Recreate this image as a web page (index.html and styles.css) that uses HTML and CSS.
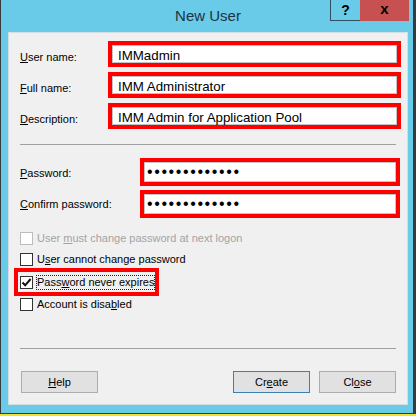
FILE: index.html
```html
<!DOCTYPE html>
<html>
<head>
<meta charset="utf-8">
<link rel="stylesheet" href="styles.css">
</head>
<body>
<div class="window">
  <div class="titlebar">
    <span class="title">New User</span>
    <div class="controls">
      <div class="ctl-help">?</div>
      <div class="ctl-close">x</div>
    </div>
  </div>
  <div class="dialog">
    <div class="group names">
      <div class="row">
        <div class="lbl"><u>U</u>ser name:</div>
        <div class="hl"><div class="input">IMMadmin</div></div>
      </div>
      <div class="row">
        <div class="lbl"><u>F</u>ull name:</div>
        <div class="hl"><div class="input">IMM Administrator</div></div>
      </div>
      <div class="row">
        <div class="lbl"><u>D</u>escription:</div>
        <div class="hl"><div class="input">IMM Admin for Application Pool</div></div>
      </div>
    </div>
    <div class="sep"></div>
    <div class="group pw">
      <div class="row">
        <div class="lbl"><u>P</u>assword:</div>
        <div class="hl"><div class="input dots">•••••••••••••</div></div>
      </div>
      <div class="row">
        <div class="lbl lbl2"><u>C</u>onfirm password:</div>
        <div class="hl"><div class="input dots">•••••••••••••</div></div>
      </div>
    </div>
    <div class="checks">
      <div class="check disabled"><span class="cb"></span><span class="ctext">User <u>m</u>ust change password at next logon</span></div>
      <div class="check"><span class="cb"></span><span class="ctext">U<u>s</u>er cannot change password</span></div>
      <div class="check marked"><span class="cb"><svg width="11" height="11" viewBox="0 0 11 11"><path d="M1.5 5.5 L4.2 8.3 L9.6 2" fill="none" stroke="#111" stroke-width="2"/></svg></span><span class="ctext focus">Pass<u>w</u>ord never expires</span></div>
      <div class="check"><span class="cb"></span><span class="ctext">Account is disa<u>b</u>led</span></div>
    </div>
    <div class="sep sep2"></div>
    <div class="buttons">
      <button class="btn"><u>H</u>elp</button>
      <button class="btn btn-default create">Cr<u>e</u>ate</button>
      <button class="btn">Cl<u>o</u>se</button>
    </div>
  </div>
</div>
</body>
</html>
```
FILE: styles.css
```css
* { box-sizing: border-box; }
html, body { margin: 0; padding: 0; }
body {
  width: 416px;
  height: 416px;
  overflow: hidden;
  background: #f1e12a;
  font-family: "Liberation Sans", Arial, sans-serif;
  font-size: 11px;
  color: #000;
}
.window {
  position: relative;
  width: 416px;
  height: 414px;
  background: #69cbe8;
  border-left: 1px solid #363b3f;
  border-right: 3px solid #363b3f;
  border-bottom: 1px solid #363b3f;
  padding: 0 5px 8px 7px;
  display: flex;
  flex-direction: column;
}
.titlebar {
  height: 32px;
  flex: none;
  display: flex;
  justify-content: center;
  padding-top: 7px;
}
.title {
  font-size: 15px;
  line-height: 18px;
  color: #1d3446;
}
.controls {
  position: absolute;
  top: 0;
  right: 4px;
  display: flex;
}
.ctl-help {
  width: 30px;
  height: 21px;
  border-left: 1px solid #2e4f60;
  border-bottom: 1px solid #2e4f60;
  text-align: center;
  font-weight: bold;
  font-size: 14px;
  line-height: 20px;
  color: #000;
}
.ctl-close {
  width: 49px;
  height: 21px;
  background: #c75050;
  text-align: center;
  font-weight: bold;
  font-size: 15px;
  line-height: 18px;
  color: #000;
}
.dialog {
  flex: 1;
  background: #f0f0f0;
  border: 1px solid #d4dfe5;
  padding: 0 11px 11px 11px;
  display: flex;
  flex-direction: column;
}
.group {
  display: flex;
  flex-direction: column;
}
.names { margin-top: 8px; gap: 5px; }
.names .row { height: 26px; }
.row { display: flex; }
.lbl {
  flex: none;
  width: 88px;
  padding-top: 10px;
  line-height: 13px;
  white-space: nowrap;
}
.hl {
  flex: 1;
  margin-right: -5px;
  border: 4px solid #ff0000;
}
.input {
  height: 100%;
  background: #fff;
  border: 1px solid #c3c3c3;
  padding: 2px 0 0 5px;
  font-size: 13.3px;
  line-height: 15px;
  white-space: nowrap;
}
.sep {
  flex: none;
  height: 1px;
  margin-top: 15px;
  background: #a0a0a0;
}
.pw { margin-top: 13px; gap: 4px; }
.pw .row { height: 28px; }
.pw .lbl { width: 120px; padding-top: 9px; }
.pw .lbl2 { padding-top: 8px; }
.pw .hl { margin-right: -4px; }
.input.dots {
  display: flex;
  align-items: center;
  padding: 0 0 0 2px;
  font-size: 16px;
  line-height: 1;
  letter-spacing: 1.6px;
  color: #000;
}
.checks {
  margin-top: 10px;
  display: flex;
  flex-direction: column;
}
.check {
  display: flex;
  align-items: center;
  height: 21px;
  gap: 4px;
  line-height: 13px;
  white-space: nowrap;
}
.cb {
  flex: none;
  width: 13px;
  height: 13px;
  border: 1px solid #333;
  background: #fff;
  display: flex;
}
.check.disabled { color: #a3a3a3; }
.check.disabled .cb { border-color: #bcbcbc; }
.check.marked {
  align-self: flex-start;
  height: 28px;
  margin: -2px 0 -2px -6px;
  padding-left: 2px;
  border: 4px solid #ff0000;
  gap: 3px;
}
.focus {
  border: 1px dotted #222;
  padding: 0;
  height: 15px;
}
.sep2 { margin-top: 33px; }
.buttons {
  margin-top: 22px;
  display: flex;
  padding-left: 1px;
}
.btn {
  width: 77px;
  height: 22px;
  padding: 0;
  margin: 0;
  background: #e1e1e1;
  border: 1px solid #adadad;
  font-family: "Liberation Sans", Arial, sans-serif;
  font-size: 11px;
  color: #000;
}
.btn-default { border-color: #3c7fb1; }
.create { margin-left: auto; margin-right: 9px; }
```
